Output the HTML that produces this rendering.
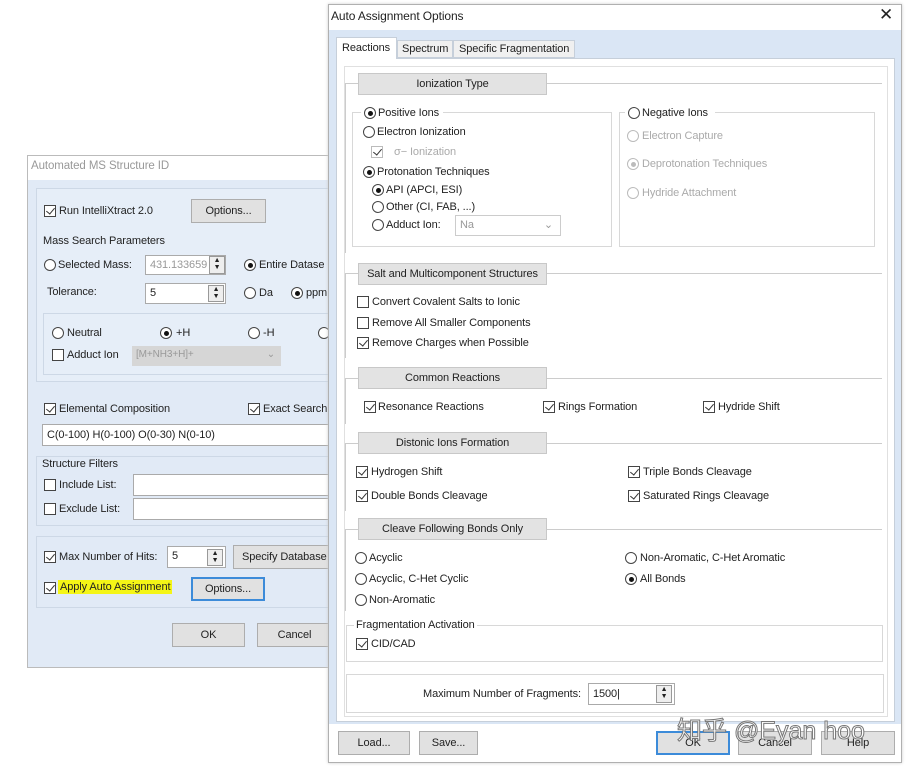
<!DOCTYPE html><html><head><meta charset="utf-8"><style>
*{margin:0;padding:0;box-sizing:border-box}
body{width:906px;height:766px;background:#fff;position:relative;overflow:hidden;font-family:"Liberation Sans",sans-serif;font-size:11px;color:#222;letter-spacing:-0.1px}
.a{position:absolute;white-space:nowrap}
.cb{position:absolute;width:12px;height:12px;border:1px solid #444;background:#fff}
.cb.k::after{content:"";position:absolute;left:3px;top:0px;width:4px;height:7px;border:solid #333;border-width:0 1.5px 1.5px 0;transform:rotate(40deg)}
.rb{position:absolute;width:12px;height:12px;border:1px solid #444;border-radius:50%;background:#fff}
.rb.k::after{content:"";position:absolute;left:2.5px;top:2.5px;width:5px;height:5px;border-radius:50%;background:#111}
.g{color:#aaa}.g .cb,.g .rb,.cb.g,.rb.g{border-color:#bbb}
.rb.g.k::after{background:#bbb}
.btn{position:absolute;background:#e1e1e1;border:1px solid #adadad;text-align:center;line-height:22px}
.inp{position:absolute;background:#fff;border:1px solid #aaa;padding-left:4px;line-height:18px}
.hdr{position:absolute;left:358px;width:189px;height:22px;background:#e3e3e3;border:1px solid #c8c8c8;text-align:center;line-height:20px}
.ln{position:absolute;height:1px;background:#ccc}
.vl{position:absolute;width:1px;background:#ccc}
.box{position:absolute;border:1px solid #d8d8d8}
.spin{position:absolute;width:16px;border:1px solid #999;background:#eee;font-size:7px;line-height:7px;text-align:center}
</style></head><body>

<!-- left dialog -->
<div class="a" style="left:27px;top:155px;width:302px;height:513px;background:#e1eaf6;border:1px solid #bbb"></div>
<div class="a" style="left:28px;top:156px;width:300px;height:24px;background:#fff"></div>
<div class="a" style="left:31px;top:160px;color:#999;font-size:11.5px">Automated MS Structure ID</div>
<div class="box" style="left:36px;top:188px;width:294px;height:194px;background:#e6eef8;border-color:#cdd8e6"></div>
<div class="cb k" style="left:44px;top:205px"></div><div class="a" style="left:59px;top:205px">Run IntelliXtract 2.0</div>
<div class="btn" style="left:191px;top:199px;width:75px;height:24px">Options...</div>
<div class="a" style="left:43px;top:235px">Mass Search Parameters</div>
<div class="rb" style="left:44px;top:259px"></div><div class="a" style="left:58px;top:259px">Selected Mass:</div>
<div class="inp" style="left:145px;top:255px;width:81px;height:20px;color:#999">431.133659</div>
<div class="spin" style="left:209px;top:256px;height:18px">▲<br>▼</div>
<div class="rb k" style="left:244px;top:259px"></div><div class="a" style="left:259px;top:259px">Entire Datase</div>
<div class="a" style="left:47px;top:286px">Tolerance:</div>
<div class="inp" style="left:145px;top:283px;width:81px;height:21px">5</div>
<div class="spin" style="left:208px;top:285px;height:17px">▲<br>▼</div>
<div class="rb" style="left:244px;top:287px"></div><div class="a" style="left:259px;top:287px">Da</div>
<div class="rb k" style="left:291px;top:287px"></div><div class="a" style="left:306px;top:287px">ppm</div>
<div class="box" style="left:43px;top:313px;width:287px;height:62px;border-color:#cdd8e6"></div>
<div class="rb" style="left:52px;top:327px"></div><div class="a" style="left:67px;top:327px">Neutral</div>
<div class="rb k" style="left:160px;top:327px"></div><div class="a" style="left:176px;top:327px">+H</div>
<div class="rb" style="left:248px;top:327px"></div><div class="a" style="left:263px;top:327px">-H</div>
<div class="rb" style="left:318px;top:327px"></div>
<div class="cb" style="left:52px;top:349px"></div><div class="a" style="left:67px;top:349px">Adduct Ion</div>
<div class="a" style="left:132px;top:346px;width:149px;height:20px;background:#d6d6d6;color:#999;padding:3px 4px;font-size:10px">[M+NH3+H]+<span style="position:absolute;right:6px">⌄</span></div>
<div class="cb k" style="left:44px;top:403px"></div><div class="a" style="left:59px;top:403px">Elemental Composition</div>
<div class="cb k" style="left:248px;top:403px"></div><div class="a" style="left:263px;top:403px">Exact Search</div>
<div class="inp" style="left:42px;top:424px;width:290px;height:22px;line-height:20px">C(0-100) H(0-100) O(0-30) N(0-10)</div>
<div class="box" style="left:36px;top:456px;width:294px;height:70px;border-color:#cdd8e6"></div>
<div class="a" style="left:42px;top:458px">Structure Filters</div>
<div class="cb" style="left:44px;top:479px"></div><div class="a" style="left:59px;top:479px">Include List:</div>
<div class="inp" style="left:133px;top:474px;width:199px;height:22px"></div>
<div class="cb" style="left:44px;top:503px"></div><div class="a" style="left:59px;top:503px">Exclude List:</div>
<div class="inp" style="left:133px;top:498px;width:199px;height:22px"></div>
<div class="box" style="left:36px;top:536px;width:294px;height:72px;border-color:#cdd8e6"></div>
<div class="cb k" style="left:44px;top:551px"></div><div class="a" style="left:59px;top:551px">Max Number of Hits:</div>
<div class="inp" style="left:167px;top:546px;width:59px;height:22px">5</div>
<div class="spin" style="left:207px;top:549px;height:17px">▲<br>▼</div>
<div class="btn" style="left:233px;top:545px;width:100px;height:24px;text-align:left;padding-left:8px">Specify Database</div>
<div class="cb k" style="left:44px;top:582px"></div><div class="a" style="left:58px;top:580px;background:#f4f516;padding:1px 2px">Apply Auto Assignment</div>
<div class="btn" style="left:191px;top:577px;width:74px;height:24px;border:2px solid #3c8bd9;line-height:20px">Options...</div>
<div class="btn" style="left:172px;top:623px;width:73px;height:24px">OK</div>
<div class="btn" style="left:257px;top:623px;width:75px;height:24px">Cancel</div>

<!-- right dialog -->
<div class="a" style="left:328px;top:4px;width:574px;height:759px;background:#fff;border:1px solid #b0b0b0;box-shadow:0 0 3px #ccc"></div>
<div class="a" style="left:331px;top:9px;font-size:12px">Auto Assignment Options</div>
<div class="a" style="left:879px;top:5px;font-size:17px">✕</div>
<div class="a" style="left:329px;top:30px;width:572px;height:694px;background:#dae6f5"></div>
<div class="a" style="left:336px;top:58px;width:559px;height:664px;background:#fff;border:1px solid #c6cfda"></div>
<div class="a" style="left:336px;top:37px;width:61px;height:22px;background:#fff;border:1px solid #c6cfda;border-bottom:none;padding:4px 5px">Reactions</div>
<div class="a" style="left:397px;top:40px;width:56px;height:18px;background:#f0f0f0;border:1px solid #c6cfda;padding:2px 4px">Spectrum</div>
<div class="a" style="left:453px;top:40px;width:122px;height:18px;background:#f0f0f0;border:1px solid #c6cfda;padding:2px 5px">Specific Fragmentation</div>
<div class="box" style="left:344px;top:66px;width:544px;height:651px;border-color:#e0e0e0"></div>

<!-- Ionization -->
<div class="ln" style="left:547px;top:83px;width:335px"></div><div class="ln" style="left:345px;top:83px;width:13px"></div>
<div class="vl" style="left:345px;top:83px;height:170px"></div>
<div class="hdr" style="top:73px">Ionization Type</div>
<div class="box" style="left:352px;top:112px;width:260px;height:135px"></div>
<div class="box" style="left:619px;top:112px;width:256px;height:135px"></div>
<div class="a" style="left:361px;top:105px;width:82px;height:14px;background:#fff"></div>
<div class="rb k" style="left:364px;top:107px"></div><div class="a" style="left:378px;top:107px">Positive Ions</div>
<div class="rb" style="left:363px;top:126px"></div><div class="a" style="left:377px;top:126px">Electron Ionization</div>
<div class="cb k g" style="left:371px;top:146px"></div><div class="a g" style="left:394px;top:146px">σ− Ionization</div>
<div class="rb k" style="left:363px;top:166px"></div><div class="a" style="left:377px;top:166px">Protonation Techniques</div>
<div class="rb k" style="left:372px;top:184px"></div><div class="a" style="left:386px;top:184px">API (APCI, ESI)</div>
<div class="rb" style="left:372px;top:201px"></div><div class="a" style="left:386px;top:201px">Other (CI, FAB, ...)</div>
<div class="rb" style="left:372px;top:219px"></div><div class="a" style="left:386px;top:219px">Adduct Ion:</div>
<div class="inp" style="left:455px;top:215px;width:106px;height:21px;color:#999;border-color:#ccc">Na<span style="position:absolute;right:7px">⌄</span></div>
<div class="a" style="left:625px;top:105px;width:90px;height:14px;background:#fff"></div>
<div class="rb" style="left:628px;top:107px"></div><div class="a" style="left:642px;top:107px">Negative Ions</div>
<div class="rb g" style="left:627px;top:130px"></div><div class="a g" style="left:642px;top:130px">Electron Capture</div>
<div class="rb g k" style="left:627px;top:158px"></div><div class="a g" style="left:642px;top:158px">Deprotonation Techniques</div>
<div class="rb g" style="left:627px;top:187px"></div><div class="a g" style="left:642px;top:187px">Hydride Attachment</div>

<!-- Salt -->
<div class="ln" style="left:547px;top:273px;width:335px"></div><div class="ln" style="left:345px;top:273px;width:13px"></div>
<div class="vl" style="left:345px;top:273px;height:85px"></div>
<div class="hdr" style="top:263px">Salt and Multicomponent Structures</div>
<div class="cb" style="left:357px;top:296px"></div><div class="a" style="left:372px;top:296px">Convert Covalent Salts to Ionic</div>
<div class="cb" style="left:357px;top:317px"></div><div class="a" style="left:372px;top:317px">Remove All Smaller Components</div>
<div class="cb k" style="left:357px;top:337px"></div><div class="a" style="left:372px;top:337px">Remove Charges when Possible</div>

<!-- Common -->
<div class="ln" style="left:547px;top:378px;width:335px"></div><div class="ln" style="left:345px;top:378px;width:13px"></div>
<div class="vl" style="left:345px;top:378px;height:46px"></div>
<div class="hdr" style="top:367px">Common Reactions</div>
<div class="cb k" style="left:364px;top:401px"></div><div class="a" style="left:378px;top:401px">Resonance Reactions</div>
<div class="cb k" style="left:543px;top:401px"></div><div class="a" style="left:558px;top:401px">Rings Formation</div>
<div class="cb k" style="left:703px;top:401px"></div><div class="a" style="left:718px;top:401px">Hydride Shift</div>

<!-- Distonic -->
<div class="ln" style="left:547px;top:443px;width:335px"></div><div class="ln" style="left:345px;top:443px;width:13px"></div>
<div class="vl" style="left:345px;top:443px;height:68px"></div>
<div class="hdr" style="top:432px">Distonic Ions Formation</div>
<div class="cb k" style="left:356px;top:466px"></div><div class="a" style="left:371px;top:466px">Hydrogen Shift</div>
<div class="cb k" style="left:628px;top:466px"></div><div class="a" style="left:643px;top:466px">Triple Bonds Cleavage</div>
<div class="cb k" style="left:356px;top:490px"></div><div class="a" style="left:371px;top:490px">Double Bonds Cleavage</div>
<div class="cb k" style="left:628px;top:490px"></div><div class="a" style="left:643px;top:490px">Saturated Rings Cleavage</div>

<!-- Cleave -->
<div class="ln" style="left:547px;top:529px;width:335px"></div><div class="ln" style="left:345px;top:529px;width:13px"></div>
<div class="vl" style="left:345px;top:529px;height:82px"></div>
<div class="hdr" style="top:518px">Cleave Following Bonds Only</div>
<div class="rb" style="left:355px;top:552px"></div><div class="a" style="left:369px;top:552px">Acyclic</div>
<div class="rb" style="left:625px;top:552px"></div><div class="a" style="left:640px;top:552px">Non-Aromatic, C-Het Aromatic</div>
<div class="rb" style="left:355px;top:573px"></div><div class="a" style="left:369px;top:573px">Acyclic, C-Het Cyclic</div>
<div class="rb k" style="left:625px;top:573px"></div><div class="a" style="left:640px;top:573px">All Bonds</div>
<div class="rb" style="left:355px;top:594px"></div><div class="a" style="left:369px;top:594px">Non-Aromatic</div>

<!-- Fragmentation -->
<div class="box" style="left:346px;top:625px;width:537px;height:37px"></div>
<div class="a" style="left:354px;top:619px;background:#fff;padding:0 2px">Fragmentation Activation</div>
<div class="cb k" style="left:356px;top:638px"></div><div class="a" style="left:371px;top:638px">CID/CAD</div>

<div class="box" style="left:346px;top:674px;width:538px;height:39px"></div>
<div class="a" style="left:423px;top:688px">Maximum Number of Fragments:</div>
<div class="inp" style="left:588px;top:683px;width:87px;height:22px;line-height:20px">1500|</div>
<div class="spin" style="left:656px;top:685px;height:18px">▲<br>▼</div>

<div class="btn" style="left:338px;top:731px;width:72px;height:24px">Load...</div>
<div class="btn" style="left:419px;top:731px;width:59px;height:24px">Save...</div>
<div class="btn" style="left:656px;top:731px;width:74px;height:24px;border:2px solid #3c8bd9;line-height:20px">OK</div>
<div class="btn" style="left:738px;top:731px;width:74px;height:24px">Cancel</div>
<div class="btn" style="left:821px;top:731px;width:74px;height:24px">Help</div>
<div class="a" style="left:677px;top:711px;font-family:'Liberation Sans','Noto Sans CJK SC',sans-serif;font-size:25px;color:#fff;-webkit-text-stroke:1px #777;letter-spacing:0">知乎 @Eyan hoo</div>
</body></html>
